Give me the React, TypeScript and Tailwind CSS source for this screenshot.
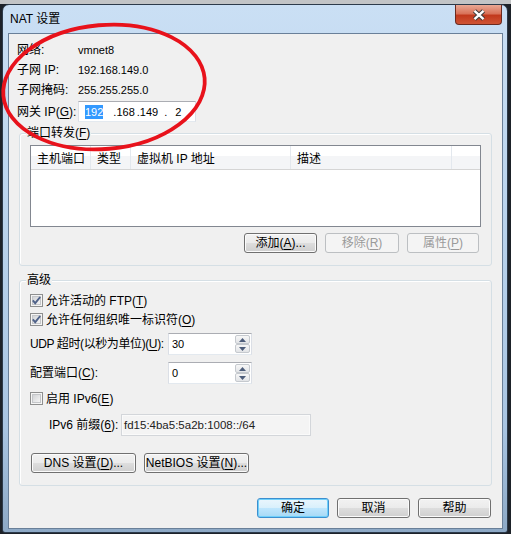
import React from "react";

// accelerator key, e.g. (G) with underlined letter
const Acc = ({ k }: { k: string }) => (
  <>
    (<span className="underline decoration-1 underline-offset-[2px]">{k}</span>)
  </>
);

type BtnProps = { children: React.ReactNode; w: string; disabled?: boolean; primary?: boolean };

function Btn({ children, w, disabled, primary }: BtnProps) {
  let look =
    "border-[#707070] bg-[linear-gradient(#f2f2f2,#ebebeb_48%,#dddddd_52%,#cfcfcf)] shadow-[inset_0_0_0_1px_#fbfbfb] text-black";
  if (disabled) look = "border-[#bcbfc2] bg-[#f4f4f4] text-[#9a9a9a]";
  if (primary)
    look =
      "border-[#3c8fcf] bg-[linear-gradient(#eaf6fd,#d9f0fc_48%,#bee6fd_52%,#a7d9f5)] shadow-[inset_0_0_0_1px_#6fd0fb] text-black";
  return (
    <button
      type="button"
      className={`${w} flex h-[20px] items-center justify-center whitespace-nowrap rounded-[3px] border text-[12px] leading-[16px] ${look}`}
    >
      {children}
    </button>
  );
}

function Check({ checked }: { checked?: boolean }) {
  return (
    <svg width="13" height="13" viewBox="0 0 13 13" className="shrink-0">
      <defs>
        <linearGradient id="cbfill" x1="0" y1="0" x2="1" y2="1">
          <stop offset="0" stopColor="#cfd1d4" />
          <stop offset="1" stopColor="#f7f7f7" />
        </linearGradient>
      </defs>
      <rect x="0.5" y="0.5" width="12" height="12" fill="#f5f5f5" stroke="#8e8f8f" />
      <rect x="2.5" y="2.5" width="8" height="8" fill="url(#cbfill)" stroke="#c4c6c9" />
      {checked && (
        <path d="M2.8 6.4 L5.2 9.2 L10.2 3" fill="none" stroke="#4f6289" strokeWidth="1.9" />
      )}
    </svg>
  );
}

function CheckRow({ children, checked, mt }: { children: React.ReactNode; checked?: boolean; mt: string }) {
  return (
    <div className={`${mt} flex h-[19px] items-center gap-[3px]`}>
      <Check checked={checked} />
      <span className="whitespace-nowrap">{children}</span>
    </div>
  );
}

function SpinBtn({ up }: { up?: boolean }) {
  return (
    <div className="flex h-[9px] w-[15px] items-center justify-center rounded-[2px] border border-[#c5c9ce] bg-[linear-gradient(#f7f7f7,#e2e4e7)]">
      <svg width="7" height="4" viewBox="0 0 7 4">
        <path d={up ? "M0 4 L3.5 0 L7 4Z" : "M0 0 L3.5 4 L7 0Z"} fill="#4d5d7a" />
      </svg>
    </div>
  );
}

function Spin({ value }: { value: string }) {
  return (
    <div className="flex h-[22px] w-[84px] shrink-0 border border-t-[#abadb3] border-x-[#dbdfe6] border-b-[#e3e9ef] bg-white">
      <span className="flex-1 pl-[3px] text-[11px] leading-[20px]">{value}</span>
      <div className="flex flex-col py-[1px] pr-[1px]">
        <SpinBtn up />
        <SpinBtn />
      </div>
    </div>
  );
}

function Row({ label, value }: { label: React.ReactNode; value: string }) {
  return (
    <div className="flex h-[20px] items-center">
      <span className="w-[61px] whitespace-nowrap">{label}</span>
      <span className="text-[11px]">{value}</span>
    </div>
  );
}

function Col({ w, children }: { w: string; children?: React.ReactNode }) {
  return (
    <div className={`${w} flex items-center whitespace-nowrap border-r border-[#e3e8ee] pl-[6px] pt-[3px]`}>
      {children}
    </div>
  );
}

export default function App() {
  return (
    <div className="relative flex h-[534px] w-[511px] flex-col overflow-hidden bg-[#1d2229] font-['Liberation_Sans','Noto_Sans_CJK_SC',sans-serif] text-[12px] leading-[16px] text-black">
      <div className="h-[4px] bg-[#c2c4c6]" />
      <div className="flex">
        {/* window */}
        <div className="ml-[2px] flex w-[506px] flex-col rounded-t-[7px] rounded-b-[3px] border border-[#2c3a4a] bg-[linear-gradient(180deg,#cadff4_0%,#bcd5ee_35%,#a9c5e2_80%,#8da9c6_100%)]">
          {/* title bar */}
          <div className="flex h-[28px] items-start justify-between">
            <span className="pl-[7px] pt-[6px] text-[12px]">NAT 设置</span>
            <div className="mr-[5px] flex h-[20px] w-[47px] items-center justify-center rounded-b-[4px] border border-t-0 border-[#6b2a1f] bg-[linear-gradient(#e9a894_0%,#d9735a_45%,#c2391d_55%,#cf5434_100%)]">
              <svg width="14" height="12" viewBox="0 0 14 12">
                <path d="M2.5 1.8 L11.5 10.2 M11.5 1.8 L2.5 10.2" stroke="#3c3c3c" strokeWidth="4.4" />
                <path d="M2.5 1.8 L11.5 10.2 M11.5 1.8 L2.5 10.2" stroke="#ffffff" strokeWidth="2.4" />
              </svg>
            </div>
          </div>

          {/* client area */}
          <div className="pb-[3px] pl-[5px] pr-[4px]">
            <div className="flex h-[496px] w-[495px] flex-col border border-[#6a8099] bg-[#f0f0f0]">
              {/* info */}
              <div className="flex flex-col pl-[8px] pt-[6px]">
                <Row label="网络:" value="vmnet8" />
                <Row label="子网 IP:" value="192.168.149.0" />
                <Row label="子网掩码:" value="255.255.255.0" />
                <div className="mt-[1px] flex h-[21px] items-center">
                  <span className="w-[61px] whitespace-nowrap">
                    网关 IP<Acc k="G" />:
                  </span>
                  <div className="flex h-[21px] w-[118px] items-center border border-t-[#abadb3] border-x-[#dbdfe6] border-b-[#e3e9ef] bg-white pl-[6px] text-[11px] leading-[14px]">
                    <span className="bg-[#3399ff] text-white">192</span>
                    <span className="ml-[10px]">.168</span>
                    <span className="ml-[2px]">.149</span>
                    <span className="ml-[6px]">.</span>
                    <span className="ml-[8px]">2</span>
                  </div>
                </div>
              </div>

              {/* port forwarding */}
              <fieldset className="mx-[10px] mt-[3px] rounded-[3px] border border-[#d5dfe5] shadow-[inset_1px_1px_0_#ffffff]">
                <legend className="ml-[6px] bg-[#f0f0f0] px-[1px] leading-[16px]">
                  端口转发<Acc k="F" />
                </legend>
                <div className="mx-[10px] mt-[4px] h-[82px] border border-[#828790] bg-white">
                  <div className="flex h-[24px] border-b border-[#d5d5d5] bg-[linear-gradient(#ffffff_0%,#ffffff_42%,#f4f5f7_43%,#f4f5f7_100%)]">
                    <Col w="w-[60px]">主机端口</Col>
                    <Col w="w-[40px]">类型</Col>
                    <Col w="w-[160px]">虚拟机 IP 地址</Col>
                    <Col w="w-[161px]">描述</Col>
                  </div>
                </div>
                <div className="mr-[12px] mt-[6px] flex justify-end gap-[8px] pb-[12px]">
                  <Btn w="w-[73px]">
                    添加<Acc k="A" />...
                  </Btn>
                  <Btn w="w-[74px]" disabled>
                    移除<Acc k="R" />
                  </Btn>
                  <Btn w="w-[72px]" disabled>
                    属性<Acc k="P" />
                  </Btn>
                </div>
              </fieldset>

              {/* advanced */}
              <fieldset className="mx-[10px] mt-[6px] rounded-[3px] border border-[#d5dfe5] shadow-[inset_1px_1px_0_#ffffff]">
                <legend className="ml-[6px] bg-[#f0f0f0] px-[1px] leading-[16px]">高级</legend>
                <div className="flex flex-col pb-[12px] pl-[10px]">
                  <CheckRow mt="mt-[3px]" checked>
                    允许活动的 FTP<Acc k="T" />
                  </CheckRow>
                  <CheckRow mt="mt-0" checked>
                    允许任何组织唯一标识符<Acc k="O" />
                  </CheckRow>
                  <div className="mt-[4px] flex items-center">
                    <span className="w-[138px] shrink-0 whitespace-nowrap tracking-[-0.4px]">
                      UDP 超时(以秒为单位)<Acc k="U" />:
                    </span>
                    <Spin value="30" />
                  </div>
                  <div className="mt-[7px] flex items-center">
                    <span className="w-[138px] shrink-0 whitespace-nowrap">
                      配置端口<Acc k="C" />:
                    </span>
                    <Spin value="0" />
                  </div>
                  <CheckRow mt="mt-[5px]">
                    启用 IPv6<Acc k="E" />
                  </CheckRow>
                  <div className="mt-[6px] flex items-center pl-[19px]">
                    <span className="w-[72px] shrink-0 whitespace-nowrap">
                      IPv6 前缀<Acc k="6" />:
                    </span>
                    <div className="flex h-[22px] w-[190px] items-center border border-[#d3d6da] bg-[#f4f4f4] pl-[2px] text-[11.5px] text-[#222] shadow-[inset_0_0_0_1px_#fafafa]">
                      fd15:4ba5:5a2b:1008::/64
                    </div>
                  </div>
                  <div className="mt-[17px] flex gap-[8px] pl-[1px]">
                    <Btn w="w-[105px]">
                      DNS 设置<Acc k="D" />...
                    </Btn>
                    <Btn w="w-[105px]">
                      NetBIOS 设置<Acc k="N" />...
                    </Btn>
                  </div>
                </div>
              </fieldset>

              {/* dialog buttons */}
              <div className="mt-[12px] flex justify-end gap-[8px] pr-[11px]">
                <Btn w="w-[72px]" primary>
                  确定
                </Btn>
                <Btn w="w-[73px]">取消</Btn>
                <Btn w="w-[73px]">帮助</Btn>
              </div>
            </div>
          </div>
        </div>
      </div>

      {/* red annotation ring */}
      <svg className="pointer-events-none absolute left-0 top-0 z-10" width="511" height="534">
        <ellipse
          cx="104"
          cy="87"
          rx="101"
          ry="62"
          transform="rotate(-5 104 87)"
          fill="none"
          stroke="#e8121b"
          strokeWidth="3.8"
        />
      </svg>
    </div>
  );
}
